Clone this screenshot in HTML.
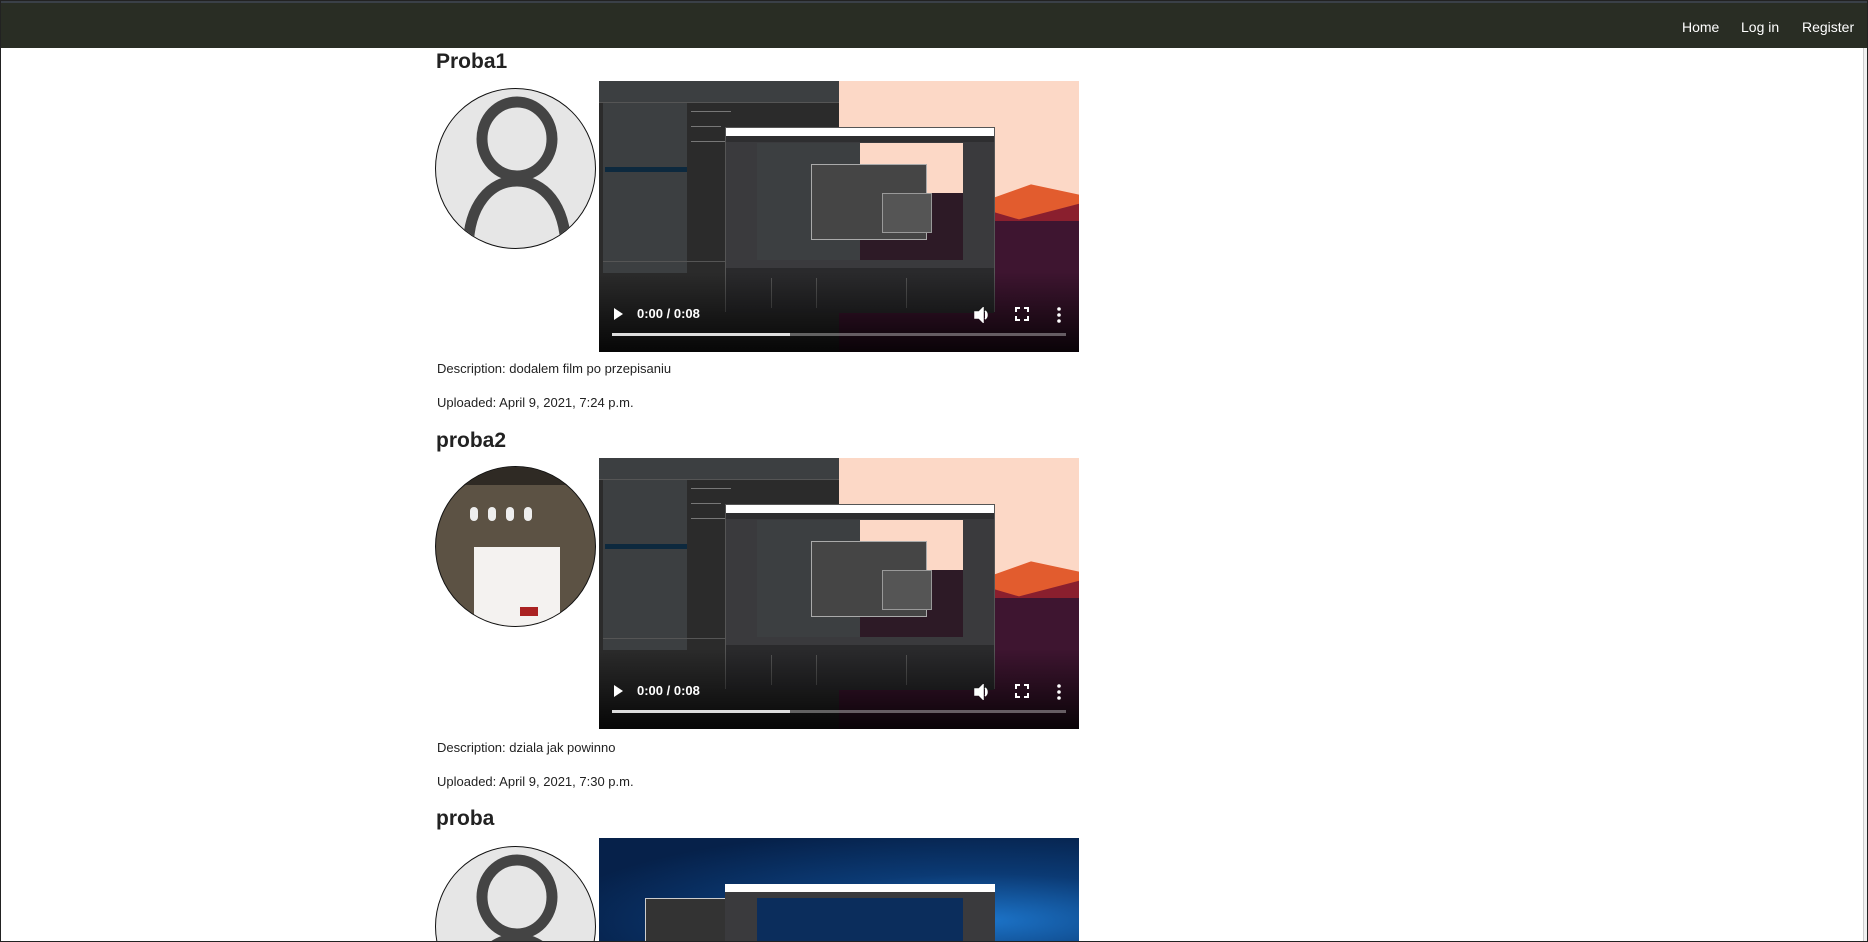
<!DOCTYPE html>
<html><head><meta charset="utf-8">
<style>
*{margin:0;padding:0;box-sizing:border-box}
html,body{width:1868px;height:942px;overflow:hidden;background:#fff}
#w{position:absolute;left:0;top:0;width:1868px;height:942px;overflow:hidden;border:1px solid #222;font-family:"Liberation Sans","DejaVu Sans",sans-serif}
.nav{position:absolute;left:0;top:0;width:1868px;height:47px;background:#292d24;border-top:2px solid #3a4048}
.nav a{position:absolute;top:16px;color:#fff;font-size:14px;text-decoration:none}
.sb{position:absolute;right:0;top:47px;width:4px;height:894px;background:#f0f0f0;border-left:1px solid #ccc}
.t{position:absolute;left:435px;font-size:21px;font-weight:bold;color:#222}
.p{position:absolute;left:436px;font-size:13px;color:#222}
.av{position:absolute;left:434px;width:161px;height:161px;border-radius:50%;border:1px solid #111;background:#e6e6e6;overflow:hidden}
.v{position:absolute;left:598px;width:480px;height:271px;overflow:hidden;background:#2b2b2b}
.ide{position:absolute;left:0;top:0;width:240px;height:271px;background:#2b2b2b}
.ide .side{position:absolute;left:4px;top:22px;width:84px;height:170px;background:#3c3f41}
.ide .top{position:absolute;left:0;top:0;width:240px;height:22px;background:#3c3f41;border-bottom:1px solid #555}
.ide .sel{position:absolute;left:6px;top:86px;width:82px;height:5px;background:#0d293e}
.ide .ln{position:absolute;left:92px;height:1px;background:#777}
.desk{position:absolute;left:240px;top:0;width:240px;height:271px;background:#fcd8c6}
.m1{position:absolute;left:240px;top:100px;width:240px;height:171px;background:#e25c2e;clip-path:polygon(0 20%,15% 10%,30% 18%,45% 5%,60% 12%,80% 2%,100% 8%,100% 100%,0 100%)}
.m2{position:absolute;left:240px;top:115px;width:240px;height:156px;background:#8a1f2e;clip-path:polygon(0 20%,20% 8%,35% 18%,55% 6%,75% 15%,100% 5%,100% 100%,0 100%)}
.m3{position:absolute;left:240px;top:140px;width:240px;height:131px;background:#3e1530}
.obs{position:absolute;left:126px;top:46px;width:270px;height:185px;background:#3a3a3d;border:1px solid #555}
.obs .tb{position:absolute;left:0;top:0;width:100%;height:8px;background:#fff}
.obs .mb{position:absolute;left:0;top:8px;width:100%;height:6px;background:#2e2e30}
.obs .pr{position:absolute;left:31px;top:15px;width:206px;height:117px;background:#2d1a26}
.obs .pr .a{position:absolute;left:103px;top:0;width:103px;height:50px;background:#fcd8c6}
.obs .pr .b{position:absolute;left:0;top:0;width:103px;height:117px;background:#3c3f41}
.obs .pr .c{position:absolute;left:54px;top:21px;width:116px;height:76px;background:#454545;border:1px solid #aaa}
.obs .pr .d{position:absolute;left:70px;top:28px;width:50px;height:40px;background:#555;border:1px solid #999}
.obs .dk{position:absolute;left:0;top:140px;width:100%;height:45px;background:#2a2a2c}
.obs .dk i{position:absolute;top:10px;height:30px;border-left:1px solid #555}
.grad{position:absolute;left:0;bottom:0;width:480px;height:80px;background:linear-gradient(rgba(0,0,0,0),rgba(0,0,0,.85))}
.play{position:absolute;left:15px;top:227px;width:0;height:0;border-left:9px solid #fff;border-top:6px solid transparent;border-bottom:6px solid transparent}
.time{position:absolute;left:38px;top:225px;color:#fff;font-size:13px;font-weight:bold}
.bar{position:absolute;left:13px;top:252px;width:454px;height:3px;background:rgba(255,255,255,.35)}
.bar b{display:block;width:178px;height:3px;background:#ddd}
.ic{position:absolute;top:226px}
.blue{background:radial-gradient(ellipse at 80% 80%,#1c74c9 0%,#0b3a74 40%,#06214a 80%)}
</style></head><body><div id="w">
<div class="nav"><a style="left:1681px">Home</a><a style="left:1740px">Log in</a><a style="left:1801px">Register</a></div>
<div class="sb"></div>

<div class="t" style="top:49px">Proba1</div>
<div class="av" style="top:87px"><svg width="161" height="161" viewBox="0 0 161 161"><ellipse cx="81" cy="50" rx="35" ry="37" fill="none" stroke="#444" stroke-width="11"/><path d="M32 162 C32 115 55 92 81 92 C107 92 130 115 130 162" fill="none" stroke="#444" stroke-width="11"/></svg></div>
<div class="v" style="top:80px">
 <div class="ide"><div class="top"></div><div class="side"></div><div class="sel"></div>
 <div class="ln" style="top:30px;width:40px"></div><div class="ln" style="top:45px;width:30px"></div><div class="ln" style="top:60px;width:35px"></div><div class="ln" style="top:180px;left:4px;width:200px;background:#555"></div></div>
 <div class="desk"></div><div class="m1"></div><div class="m2"></div><div class="m3"></div>
 <div class="obs"><div class="tb"></div><div class="mb"></div><div class="pr"><div class="a"></div><div class="b"></div><div class="c"><div class="d"></div></div></div><div class="dk"><i style="left:45px"></i><i style="left:90px"></i><i style="left:180px"></i></div></div>
 <div class="grad"></div><div class="play"></div><div class="time">0:00 / 0:08</div><div class="bar"><b></b></div>
 <svg class="ic" style="left:375px" width="16" height="16" viewBox="0 0 16 16"><path d="M1 5h4l4-4v14l-4-4H1z M11 4a5 5 0 0 1 0 8" fill="#fff" stroke="#fff" stroke-width="1.5"/></svg>
 <svg class="ic" style="left:416px" width="14" height="14" viewBox="0 0 14 14"><path d="M1 5V1h4M9 1h4v4M13 9v4H9M5 13H1V9" fill="none" stroke="#fff" stroke-width="2"/></svg>
 <svg class="ic" style="left:458px" width="4" height="16" viewBox="0 0 4 16"><circle cx="2" cy="2" r="1.8" fill="#fff"/><circle cx="2" cy="8" r="1.8" fill="#fff"/><circle cx="2" cy="14" r="1.8" fill="#fff"/></svg>
</div>
<div class="p" style="top:360px">Description: dodalem film po przepisaniu</div>
<div class="p" style="top:394px">Uploaded: April 9, 2021, 7:24 p.m.</div>

<div class="t" style="top:428px">proba2</div>
<div class="av" style="top:465px;background:#5c5244"><div style="position:absolute;left:0;top:0;width:161px;height:18px;background:#2f2a24"></div>
 <div style="position:absolute;left:34px;top:40px;width:8px;height:14px;border-radius:4px;background:#eee;box-shadow:18px 0 #eee,36px 0 #eee,54px 0 #eee"></div>
 <div style="position:absolute;left:38px;top:80px;width:86px;height:90px;background:#f4f2f0"></div>
 <div style="position:absolute;left:84px;top:140px;width:18px;height:9px;background:#a22"></div></div>
<div class="v" style="top:457px">
 <div class="ide"><div class="top"></div><div class="side"></div><div class="sel"></div>
 <div class="ln" style="top:30px;width:40px"></div><div class="ln" style="top:45px;width:30px"></div><div class="ln" style="top:60px;width:35px"></div><div class="ln" style="top:180px;left:4px;width:200px;background:#555"></div></div>
 <div class="desk"></div><div class="m1"></div><div class="m2"></div><div class="m3"></div>
 <div class="obs"><div class="tb"></div><div class="mb"></div><div class="pr"><div class="a"></div><div class="b"></div><div class="c"><div class="d"></div></div></div><div class="dk"><i style="left:45px"></i><i style="left:90px"></i><i style="left:180px"></i></div></div>
 <div class="grad"></div><div class="play"></div><div class="time">0:00 / 0:08</div><div class="bar"><b></b></div>
 <svg class="ic" style="left:375px" width="16" height="16" viewBox="0 0 16 16"><path d="M1 5h4l4-4v14l-4-4H1z M11 4a5 5 0 0 1 0 8" fill="#fff" stroke="#fff" stroke-width="1.5"/></svg>
 <svg class="ic" style="left:416px" width="14" height="14" viewBox="0 0 14 14"><path d="M1 5V1h4M9 1h4v4M13 9v4H9M5 13H1V9" fill="none" stroke="#fff" stroke-width="2"/></svg>
 <svg class="ic" style="left:458px" width="4" height="16" viewBox="0 0 4 16"><circle cx="2" cy="2" r="1.8" fill="#fff"/><circle cx="2" cy="8" r="1.8" fill="#fff"/><circle cx="2" cy="14" r="1.8" fill="#fff"/></svg>
</div>
<div class="p" style="top:739px">Description: dziala jak powinno</div>
<div class="p" style="top:773px">Uploaded: April 9, 2021, 7:30 p.m.</div>

<div class="t" style="top:806px">proba</div>
<div style="position:absolute;left:434px;top:845px;width:162px;height:95px;overflow:hidden">
<div class="av" style="left:0;top:0"><svg width="161" height="161" viewBox="0 0 161 161"><ellipse cx="81" cy="50" rx="35" ry="37" fill="none" stroke="#444" stroke-width="11"/><path d="M32 162 C32 115 55 92 81 92 C107 92 130 115 130 162" fill="none" stroke="#444" stroke-width="11"/></svg></div></div>
<div class="v blue" style="top:837px;height:103px">
 <div style="position:absolute;left:46px;top:60px;width:300px;height:43px;background:#333;border:1px solid #ccc;border-bottom:0"></div>
 <div style="position:absolute;left:126px;top:46px;width:270px;height:57px;background:#3a3a3d;border-top:8px solid #fff"></div>
 <div style="position:absolute;left:158px;top:60px;width:206px;height:43px;background:#0b2d5c"></div>
</div>
</div></body></html>
